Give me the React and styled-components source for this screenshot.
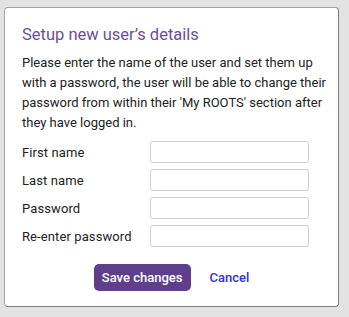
import React from "react";
import styled, { createGlobalStyle } from "styled-components";

const GlobalStyle = createGlobalStyle`
  html, body {
    margin: 0;
    padding: 0;
    background: #e3e3e3;
    font-family: Roboto, "Liberation Sans", sans-serif;
  }
`;

const Page = styled.div`
  width: 349px;
  height: 317px;
  padding: 7px 0 0 4px;
  box-sizing: border-box;
`;

const Modal = styled.div`
  width: 335px;
  height: 300px;
  box-sizing: border-box;
  background: #ffffff;
  border: 1px solid #a3a3a3;
  border-right-color: #7d7d7d;
  border-bottom-color: #7d7d7d;
  border-radius: 4px;
  padding: 16px 8px 0 17px;
  display: flex;
  flex-direction: column;
`;

const Title = styled.h2`
  margin: 0;
  font-size: 16.5px;
  line-height: 22px;
  font-weight: 400;
  color: #6a4f98;
`;

const Intro = styled.p`
  margin: 7px 0 0;
  font-size: 13px;
  line-height: 20px;
  font-weight: 400;
  color: #222;
`;

const Form = styled.div`
  display: grid;
  grid-template-columns: 128px 159px;
  grid-auto-rows: 22px;
  row-gap: 6px;
  margin-top: 8px;
  align-items: center;
`;

const Label = styled.label`
  font-size: 13px;
  font-weight: 400;
  color: #222;
  letter-spacing: 0.1px;
`;

const Input = styled.input`
  width: 100%;
  height: 22px;
  box-sizing: border-box;
  border: 1px solid #cfcfcf;
  border-radius: 3px;
  background: #fff;
  padding: 0 6px;
  outline: none;
`;

const Actions = styled.div`
  display: flex;
  justify-content: center;
  align-items: center;
  gap: 19px;
  margin-top: 17px;
  padding-right: 9px;
`;

const SaveButton = styled.button`
  height: 27px;
  width: 97px;
  border: none;
  border-radius: 5px;
  background: #5d3f8c;
  color: #ffffff;
  font-family: inherit;
  font-size: 13px;
  font-weight: 500;
  padding: 0;
  cursor: pointer;
`;

const CancelLink = styled.a`
  color: #3030d8;
  font-size: 13px;
  font-weight: 500;
  text-decoration: none;
  cursor: pointer;
`;

const fields = ["First name", "Last name", "Password", "Re-enter password"];

export default function App() {
  return (
    <Page>
      <GlobalStyle />
      <Modal>
        <Title>Setup new user’s details</Title>
        <Intro>
          Please enter the name of the user and set them up with a password,
          the user will be able to change their password from within their
          'My ROOTS' section after they have logged in.
        </Intro>
        <Form>
          {fields.map((f) => (
            <React.Fragment key={f}>
              <Label>{f}</Label>
              <Input type={f.toLowerCase().includes("password") ? "password" : "text"} />
            </React.Fragment>
          ))}
        </Form>
        <Actions>
          <SaveButton>Save changes</SaveButton>
          <CancelLink>Cancel</CancelLink>
        </Actions>
      </Modal>
    </Page>
  );
}
